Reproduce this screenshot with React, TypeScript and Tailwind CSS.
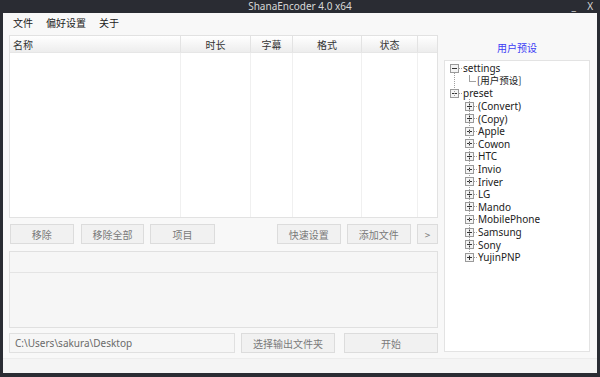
import React from "react";

const cjk = { fontFamily: '"Noto Sans CJK SC", "Noto Sans", sans-serif' };
const lat = { fontFamily: '"Noto Sans", "Noto Sans CJK SC", sans-serif' };

function Box({ minus }: { minus?: boolean }) {
  return (
    <svg width="9" height="9" viewBox="0 0 9 9" className="shrink-0">
      <rect x="0.5" y="0.5" width="8" height="8" fill="#f4f4f4" stroke="#9a9a9a" />
      <line x1="2" y1="4.5" x2="7" y2="4.5" stroke="#333" />
      {!minus && <line x1="4.5" y1="2" x2="4.5" y2="7" stroke="#333" />}
    </svg>
  );
}

function Btn({ label, w, ml }: { label: string; w: string; ml?: string }) {
  return (
    <div
      className={`h-[20px] ${w} ${ml ?? ""} bg-[#f1f1f1] border border-[#dcdcdc] flex items-center justify-center text-[10px] text-[#7a7a7a]`}
      style={cjk}
    >
      {label}
    </div>
  );
}

const presets = [
  "(Convert)",
  "(Copy)",
  "Apple",
  "Cowon",
  "HTC",
  "Invio",
  "Iriver",
  "LG",
  "Mando",
  "MobilePhone",
  "Samsung",
  "Sony",
  "YujinPNP",
];

export default function App() {
  return (
    <div className="w-[600px] h-[377px] bg-[#2a2c33] flex flex-col overflow-hidden">
      <div className="h-[13px] relative shrink-0">
        <div className="absolute inset-x-0 top-[0px] text-center text-[10px] leading-[13px] text-[#d8d8d8]" style={lat}>
          ShanaEncoder 4.0 x64
        </div>
        <div className="absolute right-[24px] top-[0px] text-[10px] leading-[12px] text-[#d8d8d8]" style={lat}>_</div>
        <div className="absolute right-[7px] top-[0px] text-[10px] leading-[13px] text-[#d8d8d8]" style={lat}>X</div>
      </div>
      <div className="flex-1 mx-[3px] mb-[4px] bg-[#f8f8f8] flex flex-col">
        <div className="h-[19px] flex items-center text-[10px] text-[#222] pl-[10px] gap-[13px]" style={cjk}>
          <span>文件</span>
          <span>偏好设置</span>
          <span>关于</span>
        </div>
        <div className="flex">
          <div className="ml-[6px] w-[429px] mt-[3px] flex flex-col">
            {/* table */}
            <div className="h-[183px] border border-[#e2e2e2] bg-white flex flex-col">
              <div className="h-[17px] flex text-[10px] text-[#333] bg-gradient-to-b from-white to-[#ededed] border-b border-[#e6e6e6]" style={cjk}>
                <div className="w-[171px] pl-[3px] flex items-center border-r border-[#e3e3e3]">名称</div>
                <div className="w-[70px] flex items-center justify-center border-r border-[#e3e3e3]">时长</div>
                <div className="w-[42px] flex items-center justify-center border-r border-[#e3e3e3]">字幕</div>
                <div className="w-[69px] flex items-center justify-center border-r border-[#e3e3e3]">格式</div>
                <div className="w-[56px] flex items-center justify-center border-r border-[#e3e3e3]">状态</div>
                <div className="flex-1" />
              </div>
              <div className="flex-1 flex">
                <div className="w-[171px] border-r border-[#f0f0f0]" />
                <div className="w-[70px] border-r border-[#f0f0f0]" />
                <div className="w-[42px] border-r border-[#f0f0f0]" />
                <div className="w-[69px] border-r border-[#f0f0f0]" />
                <div className="w-[56px] border-r border-[#f0f0f0]" />
                <div className="flex-1" />
              </div>
            </div>
            {/* buttons */}
            <div className="mt-[6px] flex">
              <Btn label="移除" w="w-[64px]" ml="ml-[1px]" />
              <Btn label="移除全部" w="w-[64px]" ml="ml-[7px]" />
              <Btn label="项目" w="w-[65px]" ml="ml-[6px]" />
              <Btn label="快速设置" w="w-[64px]" ml="ml-[62px]" />
              <Btn label="添加文件" w="w-[65px]" ml="ml-[6px]" />
              <Btn label=">" w="w-[21px]" ml="ml-[6px]" />
            </div>
            {/* log box */}
            <div className="mt-[7px] h-[77px] border border-[#e0e0e0] bg-[#f6f6f6] flex flex-col">
              <div className="h-[21px] border-b border-[#e4e4e4]" />
            </div>
            {/* bottom row */}
            <div className="mt-[5px] flex">
              <div className="w-[226px] h-[20px] border border-[#e0e0e0] bg-[#f6f6f6] flex items-center pl-[5px] text-[10px] text-[#6a6a6a]" style={lat}>
                C:\Users\sakura\Desktop
              </div>
              <Btn label="选择输出文件夹" w="w-[94px]" ml="ml-[6px]" />
              <Btn label="开始" w="w-[94px]" ml="ml-[9px]" />
            </div>
          </div>
          {/* right panel */}
          <div className="ml-[6px] w-[146px] flex flex-col">
            <div className="h-[28px] flex items-center justify-center text-[10px] text-[#3b3bf5] pt-[2px]" style={cjk}>
              用户预设
            </div>
            <div className="h-[292px] border border-[#e3e3e3] bg-white pt-[1px] pl-[5px] text-[10px] leading-[12px] text-[#222] relative" style={lat}>
              <div className="absolute left-[9px] top-[12px] h-[25px] border-l border-dotted border-[#a0a0a0]" />
              <div className="absolute left-[24px] top-[38px] h-[157px] border-l border-dotted border-[#a0a0a0]" />
              <div className="h-[12.6px] flex items-center">
                <Box minus />
                <span className="w-[3px] border-t border-dotted border-[#a0a0a0] mr-[1px]" />
                <span>settings</span>
              </div>
              <div className="h-[12.6px] flex items-center pl-[19px]">
                <span className="w-[7px] h-[7px] self-start border-l border-b border-[#a0a0a0] mr-[1px]" />
                <span className="text-[9.5px] leading-[11px]" style={cjk}>[用户预设]</span>
              </div>
              <div className="h-[12.6px] flex items-center">
                <Box minus />
                <span className="w-[3px] border-t border-dotted border-[#a0a0a0] mr-[1px]" />
                <span>preset</span>
              </div>
              {presets.map((p) => (
                <div key={p} className="h-[12.6px] flex items-center pl-[15px]">
                  <Box />
                  <span className="w-[3px] border-t border-dotted border-[#a0a0a0] mr-[1px]" />
                  <span>{p}</span>
                </div>
              ))}
            </div>
          </div>
        </div>
        <div className="mt-[5px] flex-1 border-t border-[#ececec] bg-[#f4f4f4]" />
      </div>
    </div>
  );
}
